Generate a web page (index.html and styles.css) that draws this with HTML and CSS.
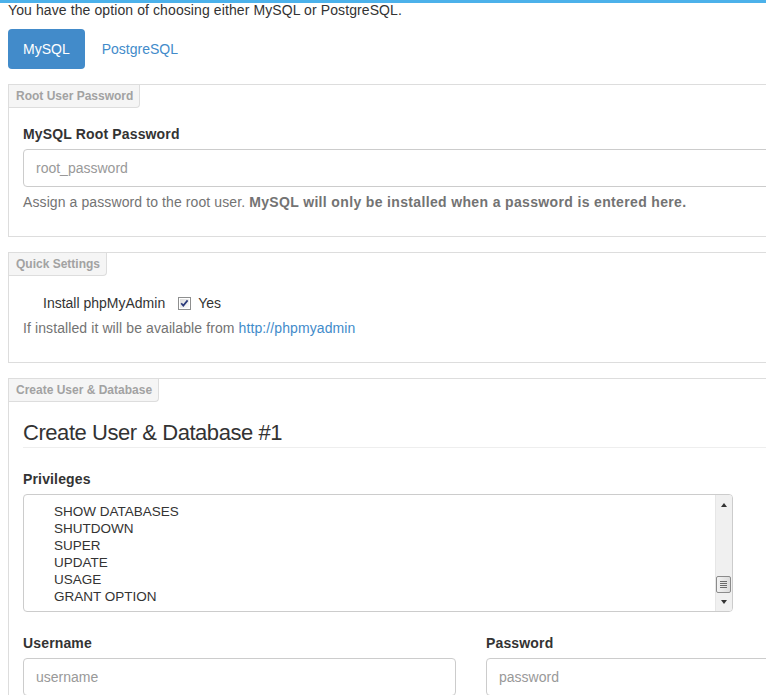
FILE: index.html
```html
<!DOCTYPE html>
<html lang="en">
<head>
<meta charset="utf-8">
<title>Database</title>
<link rel="stylesheet" href="styles.css">
</head>
<body>
<div class="topbar"></div>
<p class="intro">You have the option of choosing either MySQL or PostgreSQL.</p>
<ul class="pills">
  <li class="active"><a href="#">MySQL</a></li>
  <li><a href="#">PostgreSQL</a></li>
</ul>

<section class="fs">
  <div class="legend">Root User Password</div>
  <div class="fs-body">
    <label class="lbl">MySQL Root Password</label>
    <div class="input"><span class="ph">root_password</span></div>
    <p class="help">Assign a password to the root user. <strong>MySQL will only be installed when a password is entered here.</strong></p>
  </div>
</section>

<section class="fs">
  <div class="legend">Quick Settings</div>
  <div class="fs-body">
    <div class="check-row">
      <span>Install phpMyAdmin</span>
      <svg class="cb" width="13" height="13" viewBox="0 0 13 13">
        <defs>
          <linearGradient id="cbg" x1="0" y1="0" x2="1" y2="1">
            <stop offset="0" stop-color="#dcdcdc"/>
            <stop offset="1" stop-color="#fbfbfb"/>
          </linearGradient>
        </defs>
        <rect x="0.5" y="0.5" width="12" height="12" fill="#fff" stroke="#8e8f8f"/>
        <rect x="2" y="2" width="9" height="9" fill="url(#cbg)"/>
        <path d="M3.2 6.2 L5.3 8.6 L9.6 3.4" fill="none" stroke="#2b3a7a" stroke-width="1.7"/>
      </svg>
      <span class="yes">Yes</span>
    </div>
    <p class="help2">If installed it will be available from <a href="#">http://phpmyadmin</a></p>
  </div>
</section>

<section class="fs">
  <div class="legend">Create User &amp; Database</div>
  <div class="fs-body">
    <h3 class="title">Create User &amp; Database #1</h3>
    <div class="group">
      <label class="lbl">Privileges</label>
      <div class="listbox">
        <ul class="options">
          <li>SHOW DATABASES</li>
          <li>SHUTDOWN</li>
          <li>SUPER</li>
          <li>UPDATE</li>
          <li>USAGE</li>
          <li>GRANT OPTION</li>
        </ul>
        <div class="sbar">
          <span class="arrow up"></span>
          <span class="thumb"><i></i><i></i><i></i><i></i></span>
          <span class="arrow down"></span>
        </div>
      </div>
    </div>
    <div class="cols">
      <div>
        <label class="lbl">Username</label>
        <div class="input"><span class="ph">username</span></div>
      </div>
      <div>
        <label class="lbl">Password</label>
        <div class="input"><span class="ph">password</span></div>
      </div>
    </div>
  </div>
</section>
</body>
</html>
```
FILE: styles.css
```css
html {
  overflow: hidden;
}
body {
  margin: 0;
  padding: 0 0 0 8px;
  font-family: "Liberation Sans", Arial, sans-serif;
  font-size: 14px;
  line-height: 20px;
  color: #333;
  background: #fff;
}
.topbar {
  position: fixed;
  top: 0;
  left: 0;
  right: 0;
  height: 3px;
  background: #4cb1ea;
}
.intro {
  margin: 0 0 9px;
  letter-spacing: 0.1px;
}
.pills {
  display: flex;
  gap: 2px;
  list-style: none;
  margin: 0 0 15px;
  padding: 0;
}
.pills a {
  display: block;
  padding: 10px 15px;
  border-radius: 4px;
  color: #428bca;
  text-decoration: none;
}
.pills .active a {
  background: #428bca;
  color: #fff;
}
.fs {
  width: 926px;
  min-width: 926px;
  max-width: none;
  box-sizing: border-box;
  border: 1px solid #dddddd;
  margin-bottom: 15px;
}
.legend {
  width: fit-content;
  height: 22px;
  line-height: 22px;
  padding: 0 6px 0 7px;
  background: #f5f5f5;
  border-right: 1px solid #dddddd;
  border-bottom: 1px solid #dddddd;
  border-bottom-right-radius: 4px;
  font-size: 12px;
  font-weight: bold;
  color: #a2a2a2;
}
.fs-body {
  padding: 16px 14px 24px;
}
.lbl {
  display: block;
  font-weight: bold;
  margin-bottom: 5px;
  letter-spacing: 0.15px;
}
.input {
  height: 38px;
  box-sizing: border-box;
  border: 1px solid #cccccc;
  border-radius: 4px;
  padding: 0 12px;
  line-height: 36px;
  background: #fff;
}
.ph {
  color: #999;
}
.help {
  margin: 5px 0 0;
  color: #737373;
  letter-spacing: 0.1px;
}
.help strong {
  letter-spacing: 0.35px;
}
.check-row {
  display: flex;
  align-items: center;
  margin: 1px 0 0;
  padding-left: 20px;
}
.cb {
  margin-left: 13px;
  margin-right: 7px;
  display: block;
}
.help2 {
  margin: 5px 0 0;
  color: #737373;
  letter-spacing: 0.1px;
}
.help2 a {
  color: #428bca;
  text-decoration: none;
}
.title {
  margin: 3px 0 0;
  padding-bottom: 2px;
  font-size: 22px;
  letter-spacing: -0.45px;
  line-height: 24px;
  font-weight: normal;
  color: #333;
  border-bottom: 1px solid #eeeeee;
}
.group {
  margin-top: 21px;
  margin-bottom: 21px;
}
.listbox {
  position: relative;
  width: 710px;
  height: 118px;
  box-sizing: border-box;
  border: 1px solid #cccccc;
  border-radius: 4px;
  overflow: hidden;
}
.options {
  list-style: none;
  margin: 0;
  padding: 8px 0 0 30px;
  font-size: 13.5px;
  line-height: 17px;
  color: #333;
}
.sbar {
  position: absolute;
  top: 0;
  right: 0;
  bottom: 0;
  width: 16px;
  background: #f0f0f0;
  border-left: 1px solid #e6e6e6;
}
.arrow {
  position: absolute;
  left: 5px;
  width: 0;
  height: 0;
  border-left: 3px solid transparent;
  border-right: 3px solid transparent;
}
.arrow.up {
  top: 8px;
  border-bottom: 4px solid #333;
}
.arrow.down {
  bottom: 7px;
  border-top: 4px solid #333;
}
.thumb {
  position: absolute;
  left: 0;
  right: 1px;
  top: 81px;
  height: 17px;
  box-sizing: border-box;
  border: 1px solid #8b8b8b;
  border-radius: 2px;
  background: linear-gradient(to right, #f2f2f2, #dcdcdc);
  display: flex;
  flex-direction: column;
  justify-content: center;
  align-items: center;
  gap: 1px;
}
.thumb i {
  display: block;
  width: 7px;
  height: 1px;
  background: #6a6a6a;
}
.cols {
  display: grid;
  grid-template-columns: 1fr 1fr;
  column-gap: 30px;
}
```
